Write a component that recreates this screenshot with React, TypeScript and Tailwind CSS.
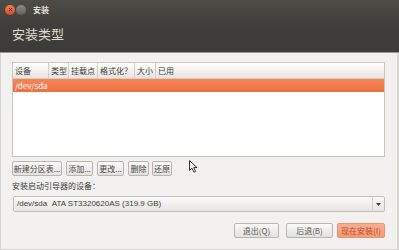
import React from "react";

const cjk = { fontFamily: '"Noto Sans CJK SC", "Noto Sans", sans-serif' };

function Btn({ children, className = "" }: { children: React.ReactNode; className?: string }) {
  return (
    <div
      className={
        "h-[15px] flex items-center justify-center rounded-[2px] border border-[#b9b6b1] bg-gradient-to-b from-[#fbfaf9] to-[#e3e1dd] text-[8px] leading-none text-[#4a4945] " +
        className
      }
    >
      {children}
    </div>
  );
}

export default function App() {
  const cols = [
    { t: "设备", w: 36, b: true },
    { t: "类型", w: 20, b: true },
    { t: "挂载点", w: 29, b: true },
    { t: "格式化？", w: 37, b: true },
    { t: "大小", w: 21, b: true },
    { t: "已用", w: 30, b: false },
  ];
  return (
    <div className="w-[399px] h-[250px] bg-[#3c3b37] flex flex-col relative overflow-hidden" style={cjk}>
      {/* title bar + header */}
      <div className="h-[52px] flex flex-col bg-gradient-to-b from-[#4d4c47] via-[#3f3e3a] to-[#3c3b37]">
        <div className="h-[18px] flex items-center pl-[5px] pt-[1px]">
          <div className="w-[10px] h-[10px] rounded-full bg-gradient-to-b from-[#f47a4f] to-[#dd4a1c] flex items-center justify-center">
            <svg width="5" height="5" viewBox="0 0 5 5">
              <path d="M1 1L4 4M4 1L1 4" stroke="#3c3b37" strokeWidth="1" />
            </svg>
          </div>
          <div className="w-[10px] h-[10px] rounded-full bg-gradient-to-b from-[#8a8984] to-[#63625e] ml-[1px]" />
          <div className="ml-[7px] text-[8px] font-bold text-[#dfdbd2] leading-none">安装</div>
        </div>
        <div className="pl-[12px] pt-[9px] text-[13px] leading-none text-[#dfdbd2]">安装类型</div>
      </div>
      <div className="h-[1px] bg-[#9a9893]" />
      {/* content */}
      <div className="flex-1 bg-[#f2f1f0] flex flex-col pl-[11px] pr-[12px] border-l border-r-2 border-b border-[#d6d3ce]">
        <div className="mt-[9px] h-[95px] border border-[#c9c6c1] bg-white flex flex-col">
          <div className="h-[16px] flex bg-gradient-to-b from-[#ffffff] to-[#e6e4e1] border-b border-[#d2cfca]">
            {cols.map((c, i) => (
              <div
                key={i}
                className={
                  "h-full flex items-center pl-[2px] text-[8px] leading-none text-[#3c3b37] " +
                  (c.b ? "border-r border-[#d2cfca]" : "")
                }
                style={{ width: c.w }}
              >
                {c.t}
              </div>
            ))}
          </div>
          <div className="h-[13px] flex items-center pl-[2px] bg-gradient-to-b from-[#f3865a] to-[#ee6f3e] text-[8px] leading-none text-white">
            /dev/sda
          </div>
        </div>
        <div className="mt-[4px] flex items-center">
          <Btn className="w-[50px]">新建分区表...</Btn>
          <Btn className="w-[27px] ml-[4px]">添加...</Btn>
          <Btn className="w-[27px] ml-[4px]">更改...</Btn>
          <Btn className="w-[21px] ml-[4px]">删除</Btn>
          <Btn className="w-[20px] ml-[3px]">还原</Btn>
        </div>
        <div className="mt-[6px] text-[8px] leading-none text-[#3c3b37]">安装启动引导器的设备：</div>
        <div className="mt-[6px] ml-[1px] h-[16px] flex items-center rounded-[2px] border border-[#c2bfba] bg-gradient-to-b from-[#fbfaf9] to-[#e6e4e1]">
          <div
            className="flex-1 pl-[3px] text-[8px] leading-none text-[#3c3b37]"
            style={{ fontFamily: '"Liberation Sans", "Noto Sans CJK SC", sans-serif' }}
          >
            /dev/sda&nbsp;&nbsp;ATA ST3320620AS (319.9 GB)
          </div>
          <div className="w-[1px] h-[12px] bg-[#d2cfca]" />
          <div className="w-[11px] flex items-center justify-center">
            <svg width="5" height="3" viewBox="0 0 5 3">
              <path d="M0 0H5L2.5 3Z" fill="#3c3b37" />
            </svg>
          </div>
        </div>
        <div className="mt-[11px] flex items-center justify-end">
          <Btn className="w-[45px] text-[#5a5955]">退出(Q)</Btn>
          <Btn className="w-[47px] ml-[7px] text-[#5a5955]">后退(B)</Btn>
          <div className="w-[48px] ml-[4px] h-[15px] flex items-center justify-center rounded-[2px] border border-[#e99574] bg-gradient-to-b from-[#f9ad90] to-[#f39a78] text-[8px] leading-none text-[#c04f28]">
            现在安装(I)
          </div>
        </div>
      </div>
      {/* mouse cursor */}
      <svg className="absolute left-[189px] top-[160px]" width="9" height="13" viewBox="0 0 9 13">
        <path d="M0.5 0.5V10.5L3 8.2L5 12.3L6.6 11.5L4.7 7.6H8Z" fill="#f2f1f0" stroke="#3c3b37" strokeWidth="1" />
      </svg>
    </div>
  );
}
